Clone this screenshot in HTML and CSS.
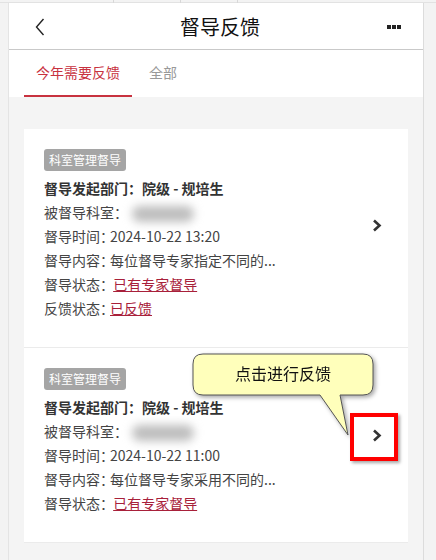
FILE: index.html
```html
<!DOCTYPE html>
<html lang="zh-CN">
<head>
    <meta charset="UTF-8">
    <meta name="viewport" content="width=device-width, initial-scale=1.0">
    <title>督导反馈</title>
    <link rel="stylesheet" href="styles.css">
</head>
<body>

<div class="top-strip">
    <span class="seg seg-a"></span>
    <span class="seg seg-b"></span>
    <span class="seg seg-c"></span>
</div>

<div class="frame">
    <div class="header">
        <span class="back">
            <svg width="10" height="18" viewBox="0 0 10 18"><path d="M8.5 1 L1.5 9 L8.5 17" fill="none" stroke="#222" stroke-width="1.4"/></svg>
        </span>
        <div class="title">督导反馈</div>
        <span class="more"><i></i><i></i><i></i></span>
    </div>

    <div class="tabs">
        <div class="tab active">今年需要反馈</div>
        <div class="tab">全部</div>
    </div>

    <div class="content">
        <div class="card">
            <div class="item">
                <div class="info">
                    <div class="tag">科室管理督导</div>
                    <div class="row bold">督导发起部门：院级 - 规培生</div>
                    <div class="row"><span class="lbl">被督导科室：</span><span class="blur"></span></div>
                    <div class="row"><span class="lbl">督导时间：</span>2024-10-22 13:20</div>
                    <div class="row"><span class="lbl">督导内容：</span>每位督导专家指定不同的...</div>
                    <div class="row"><span class="lbl">督导状态：</span>&nbsp;<a class="link">已有专家督导</a></div>
                    <div class="row"><span class="lbl">反馈状态：</span><a class="link">已反馈</a></div>
                </div>
                <span class="arrow">
                    <svg width="10" height="13" viewBox="0 0 10 13"><path d="M2 1.5 L7.5 6.5 L2 11.5" fill="none" stroke="#333" stroke-width="2.6"/></svg>
                </span>
            </div>
            <div class="item second">
                <div class="info">
                    <div class="tag">科室管理督导</div>
                    <div class="row bold">督导发起部门：院级 - 规培生</div>
                    <div class="row"><span class="lbl">被督导科室：</span><span class="blur"></span></div>
                    <div class="row"><span class="lbl">督导时间：</span>2024-10-22 11:00</div>
                    <div class="row"><span class="lbl">督导内容：</span>每位督导专家采用不同的...</div>
                    <div class="row"><span class="lbl">督导状态：</span>&nbsp;<a class="link">已有专家督导</a></div>
                </div>
                <span class="arrow">
                    <svg width="10" height="13" viewBox="0 0 10 13"><path d="M2 1.5 L7.5 6.5 L2 11.5" fill="none" stroke="#333" stroke-width="2.6"/></svg>
                </span>

                <div class="callout">
                    <svg width="192" height="92" viewBox="0 0 192 92">
                        <path d="M13 3 H173 Q183 3 183 13 V34 Q183 44 173 44 H150 L158 84 L130 44 H13 Q3 44 3 34 V13 Q3 3 13 3 Z" fill="#ffffbb" stroke="#555" stroke-width="1"/>
                        <text x="93" y="29" text-anchor="middle" class="callout-text">点击进行反馈</text>
                    </svg>
                </div>
                <div class="highlight"></div>
            </div>
        </div>
    </div>
</div>

</body>
</html>
```

FILE: styles.css
```css
body {
    margin: 0;
    background-color: #f3f3f3;
    font-family: "Noto Sans CJK SC", "Noto Sans", sans-serif;
    color: #333;
    height: 560px;
    overflow: hidden;
}
.top-strip {
    height: 2px;
    border-bottom: 1px solid #e2e2e2;
    position: relative;
}
.seg {
    position: absolute;
    top: 0;
    width: 1px;
    height: 3px;
    background-color: #d8d8d8;
}
.seg-a { left: 113px; }
.seg-b { left: 180px; }
.seg-c { left: 237px; }
.frame {
    margin-left: 8px;
    width: 414px;
    height: 557px;
    border-left: 1px solid #e4e4e4;
    border-right: 1px solid #dcdcdc;
    background-color: #f4f4f4;
}
.header {
    height: 46px;
    background-color: #fff;
    border-bottom: 1px solid #c9c9c9;
    display: flex;
    align-items: center;
    justify-content: space-between;
    padding: 0 22px 0 26px;
}
.back {
    display: flex;
    width: 10px;
    margin-top: 1px;
}
.title {
    font-size: 20px;
    color: #111;
    margin-left: 8px;
}
.more {
    display: flex;
    gap: 1px;
    margin-top: 2px;
}
.more i {
    width: 4px;
    height: 4px;
    background-color: #222;
}
.tabs {
    height: 47px;
    background-color: #fff;
    display: flex;
    padding-left: 15px;
    gap: 5px;
}
.tab {
    padding: 0 12px;
    font-size: 14px;
    line-height: 45px;
    color: #999;
    border-bottom: 2px solid transparent;
}
.tab.active {
    color: #c8323f;
    border-bottom-color: #c8323f;
}
.content {
    padding: 32px 15px 0;
}
.card {
    background-color: #fff;
}
.item {
    display: flex;
    align-items: center;
    padding: 20px 0 27px 20px;
    border-bottom: 1px solid #ebebeb;
    position: relative;
}
.info {
    flex: 1;
}
.tag {
    width: fit-content;
    height: 22px;
    line-height: 22px;
    padding: 0 5px;
    font-size: 12px;
    color: #fff;
    background-color: #a5a5a5;
    border-radius: 3px;
    margin-bottom: 5px;
}
.row {
    font-size: 14px;
    line-height: 24px;
    color: #444;
    white-space: nowrap;
}
.row.bold {
    font-weight: bold;
    color: #333;
}
.lbl {
    margin-right: -4px;
}
.blur {
    display: inline-block;
    vertical-align: middle;
    width: 62px;
    height: 16px;
    margin-left: 8px;
    background-color: #bdbdbd;
    border-radius: 8px;
    filter: blur(5px);
}
.link {
    color: #a8203a;
    text-decoration: underline;
}
.arrow {
    display: flex;
    width: 10px;
    margin: 0 26px 18px 0;
}
.second .arrow {
    margin-bottom: 12px;
}
.callout {
    position: absolute;
    left: 166px;
    top: 3px;
    filter: drop-shadow(2px 2px 2px rgba(0, 0, 0, 0.35));
}
.callout svg {
    display: block;
}
.callout-text {
    font-family: "Noto Sans CJK SC", sans-serif;
    font-size: 16px;
    fill: #111;
}
.highlight {
    position: absolute;
    left: 326px;
    top: 65px;
    width: 40px;
    height: 40px;
    border: 4px solid #f00;
    box-shadow: 2px 2px 3px rgba(0, 0, 0, 0.35);
}
```
